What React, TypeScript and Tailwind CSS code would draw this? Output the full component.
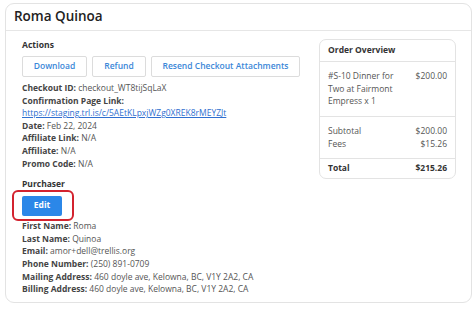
import React from "react";

const font = { fontFamily: '"Open Sans", "Liberation Sans", sans-serif' };

function Field({ label, value }: { label: string; value: string }) {
  return (
    <div className="leading-[12.6px]">
      <span className="font-bold text-[#444]">{label}:</span>{" "}
      <span className="text-[#555]">{value}</span>
    </div>
  );
}

export default function App() {
  return (
    <div className="w-[475px] h-[310px] bg-white pt-[3px] pl-[5px]" style={font}>
      <div className="w-[467px] h-[300px] border border-[#e3e3e3] rounded-[9px] overflow-hidden">
        <div className="h-[27px] border-b border-[#e6e6e6] pl-[8px] flex items-center">
          <h1 className="text-[13.5px] font-semibold text-[#222] leading-none">Roma Quinoa</h1>
        </div>
        <div className="flex pl-[16px] pr-[15px] pt-[7px] text-[8.5px]">
          <div className="flex-1">
            <div className="font-bold text-[#333] text-[8.6px] leading-[14px]">Actions</div>
            <div className="flex gap-[5px] mt-[4px]">
              <button className="h-[21px] w-[65px] border border-[#dcdcdc] rounded-[2px] text-[#3b87d8] font-semibold whitespace-nowrap">
                Download
              </button>
              <button className="h-[21px] w-[54px] border border-[#dcdcdc] rounded-[2px] text-[#3b87d8] font-semibold whitespace-nowrap">
                Refund
              </button>
              <button className="h-[21px] w-[149px] border border-[#dcdcdc] rounded-[2px] text-[#3b87d8] font-semibold whitespace-nowrap">
                Resend Checkout Attachments
              </button>
            </div>
            <div className="mt-[5px]">
              <Field label="Checkout ID" value="checkout_WT8tijSqLaX" />
              <div className="leading-[12.6px] font-bold text-[#444]">Confirmation Page Link:</div>
              <div className="leading-[12.6px]">
                <a className="text-[#2f6fd0] underline">https://staging.trl.is/c/5AEtKLpxjWZg0XREK8rMEYZJt</a>
              </div>
              <Field label="Date" value="Feb 22, 2024" />
              <Field label="Affiliate Link" value="N/A" />
              <Field label="Affiliate" value="N/A" />
              <Field label="Promo Code" value="N/A" />
            </div>
            <div className="mt-[7px] font-bold text-[#333] leading-[14px]">Purchaser</div>
            <div className="ml-[-10px] mt-[-1px] w-[62px] h-[31px] border-2 border-[#d3232f] rounded-[6px] flex items-center pl-[8px]">
              <button className="h-[20px] w-[40px] bg-[#2b87e8] rounded-[2px] text-white font-bold">
                Edit
              </button>
            </div>
            <div className="mt-[-1px]">
              <Field label="First Name" value="Roma" />
              <Field label="Last Name" value="Quinoa" />
              <Field label="Email" value="amor+dell@trellis.org" />
              <Field label="Phone Number" value="(250) 891-0709" />
              <Field label="Mailing Address" value="460 doyle ave, Kelowna, BC, V1Y 2A2, CA" />
              <Field label="Billing Address" value="460 doyle ave, Kelowna, BC, V1Y 2A2, CA" />
            </div>
          </div>
          <div className="w-[137px] h-[140px] mt-[1px] border border-[#e3e3e3] rounded-[7px] text-[#555]">
            <div className="h-[22px] border-b border-[#e3e3e3] flex items-center pl-[8px] font-bold text-[#333]">
              Order Overview
            </div>
            <div className="h-[55px] border-b border-[#e3e3e3] flex justify-between pl-[8px] pr-[8px] pt-[8px] leading-[12.5px]">
              <div className="w-[70px]">#S-10 Dinner for Two at Fairmont Empress x 1</div>
              <div>$200.00</div>
            </div>
            <div className="h-[42px] border-b border-[#e3e3e3] px-[8px] pt-[8px] leading-[12.5px]">
              <div className="flex justify-between">
                <span>Subtotal</span>
                <span>$200.00</span>
              </div>
              <div className="flex justify-between">
                <span>Fees</span>
                <span>$15.26</span>
              </div>
            </div>
            <div className="h-[19px] px-[8px] flex items-center justify-between font-bold text-[#333]">
              <span>Total</span>
              <span>$215.26</span>
            </div>
          </div>
        </div>
      </div>
    </div>
  );
}
